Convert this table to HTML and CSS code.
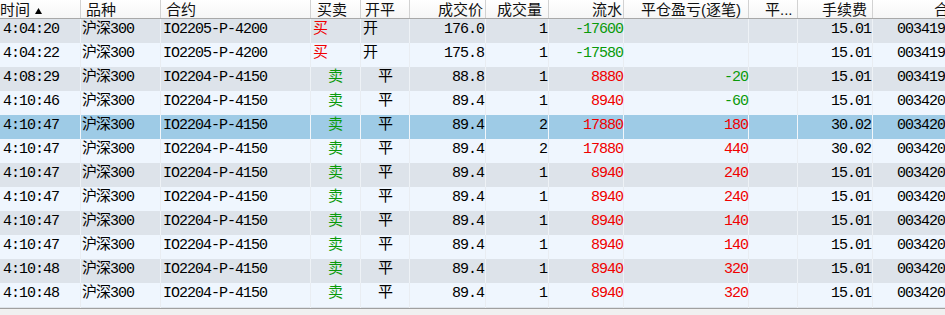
FILE: index.html
```html
<!DOCTYPE html>
<html lang="zh-CN">
<head>
<meta charset="utf-8">
<title>成交记录</title>
<link rel="stylesheet" href="styles.css">
</head>
<body>
<div class="grid">
  <div class="head">
    <div class="h c1">时间<svg class="sort" width="7" height="6" viewBox="0 0 7 6"><path d="M3.5 0L7 6H0z" fill="#000"/></svg></div>
    <div class="h c2">品种</div>
    <div class="h c3">合约</div>
    <div class="h c4">买卖</div>
    <div class="h c5">开平</div>
    <div class="h c6 r">成交价</div>
    <div class="h c7 r">成交量</div>
    <div class="h c8 r">流水</div>
    <div class="h c9 r">平仓盈亏(逐笔)</div>
    <div class="h c10">平...</div>
    <div class="h c11 r">手续费</div>
    <div class="h c12">合约编号</div>
  </div>

  <div class="row odd">
    <div class="d c1">4:04:20</div><div class="d c2">沪深300</div><div class="d c3">IO2205-P-4200</div>
    <div class="d c4 red">买</div><div class="d c5">开</div><div class="d c6 r">176.0</div><div class="d c7 r">1</div>
    <div class="d c8 r green">-17600</div><div class="d c9 r"></div><div class="d c10"></div><div class="d c11 r">15.01</div><div class="d c12">00341901</div>
  </div>
  <div class="row even">
    <div class="d c1">4:04:22</div><div class="d c2">沪深300</div><div class="d c3">IO2205-P-4200</div>
    <div class="d c4 red">买</div><div class="d c5">开</div><div class="d c6 r">175.8</div><div class="d c7 r">1</div>
    <div class="d c8 r green">-17580</div><div class="d c9 r"></div><div class="d c10"></div><div class="d c11 r">15.01</div><div class="d c12">00341902</div>
  </div>
  <div class="row odd">
    <div class="d c1">4:08:29</div><div class="d c2">沪深300</div><div class="d c3">IO2204-P-4150</div>
    <div class="d c4 green sh">卖</div><div class="d c5 sh">平</div><div class="d c6 r">88.8</div><div class="d c7 r">1</div>
    <div class="d c8 r red">8880</div><div class="d c9 r green">-20</div><div class="d c10"></div><div class="d c11 r">15.01</div><div class="d c12">00341903</div>
  </div>
  <div class="row even">
    <div class="d c1">4:10:46</div><div class="d c2">沪深300</div><div class="d c3">IO2204-P-4150</div>
    <div class="d c4 green sh">卖</div><div class="d c5 sh">平</div><div class="d c6 r">89.4</div><div class="d c7 r">1</div>
    <div class="d c8 r red">8940</div><div class="d c9 r green">-60</div><div class="d c10"></div><div class="d c11 r">15.01</div><div class="d c12">00342001</div>
  </div>
  <div class="row sel">
    <div class="d c1">4:10:47</div><div class="d c2">沪深300</div><div class="d c3">IO2204-P-4150</div>
    <div class="d c4 green sh">卖</div><div class="d c5 sh">平</div><div class="d c6 r">89.4</div><div class="d c7 r">2</div>
    <div class="d c8 r red">17880</div><div class="d c9 r red">180</div><div class="d c10"></div><div class="d c11 r">30.02</div><div class="d c12">00342002</div>
  </div>
  <div class="row even">
    <div class="d c1">4:10:47</div><div class="d c2">沪深300</div><div class="d c3">IO2204-P-4150</div>
    <div class="d c4 green sh">卖</div><div class="d c5 sh">平</div><div class="d c6 r">89.4</div><div class="d c7 r">2</div>
    <div class="d c8 r red">17880</div><div class="d c9 r red">440</div><div class="d c10"></div><div class="d c11 r">30.02</div><div class="d c12">00342003</div>
  </div>
  <div class="row odd">
    <div class="d c1">4:10:47</div><div class="d c2">沪深300</div><div class="d c3">IO2204-P-4150</div>
    <div class="d c4 green sh">卖</div><div class="d c5 sh">平</div><div class="d c6 r">89.4</div><div class="d c7 r">1</div>
    <div class="d c8 r red">8940</div><div class="d c9 r red">240</div><div class="d c10"></div><div class="d c11 r">15.01</div><div class="d c12">00342004</div>
  </div>
  <div class="row even">
    <div class="d c1">4:10:47</div><div class="d c2">沪深300</div><div class="d c3">IO2204-P-4150</div>
    <div class="d c4 green sh">卖</div><div class="d c5 sh">平</div><div class="d c6 r">89.4</div><div class="d c7 r">1</div>
    <div class="d c8 r red">8940</div><div class="d c9 r red">240</div><div class="d c10"></div><div class="d c11 r">15.01</div><div class="d c12">00342005</div>
  </div>
  <div class="row odd">
    <div class="d c1">4:10:47</div><div class="d c2">沪深300</div><div class="d c3">IO2204-P-4150</div>
    <div class="d c4 green sh">卖</div><div class="d c5 sh">平</div><div class="d c6 r">89.4</div><div class="d c7 r">1</div>
    <div class="d c8 r red">8940</div><div class="d c9 r red">140</div><div class="d c10"></div><div class="d c11 r">15.01</div><div class="d c12">00342006</div>
  </div>
  <div class="row even">
    <div class="d c1">4:10:47</div><div class="d c2">沪深300</div><div class="d c3">IO2204-P-4150</div>
    <div class="d c4 green sh">卖</div><div class="d c5 sh">平</div><div class="d c6 r">89.4</div><div class="d c7 r">1</div>
    <div class="d c8 r red">8940</div><div class="d c9 r red">140</div><div class="d c10"></div><div class="d c11 r">15.01</div><div class="d c12">00342007</div>
  </div>
  <div class="row odd">
    <div class="d c1">4:10:48</div><div class="d c2">沪深300</div><div class="d c3">IO2204-P-4150</div>
    <div class="d c4 green sh">卖</div><div class="d c5 sh">平</div><div class="d c6 r">89.4</div><div class="d c7 r">1</div>
    <div class="d c8 r red">8940</div><div class="d c9 r red">320</div><div class="d c10"></div><div class="d c11 r">15.01</div><div class="d c12">00342008</div>
  </div>
  <div class="row even">
    <div class="d c1">4:10:48</div><div class="d c2">沪深300</div><div class="d c3">IO2204-P-4150</div>
    <div class="d c4 green sh">卖</div><div class="d c5 sh">平</div><div class="d c6 r">89.4</div><div class="d c7 r">1</div>
    <div class="d c8 r red">8940</div><div class="d c9 r red">320</div><div class="d c10"></div><div class="d c11 r">15.01</div><div class="d c12">00342009</div>
  </div>
  <div class="row odd">
    <div class="d c1">4:10:48</div><div class="d c2">沪深300</div><div class="d c3">IO2204-P-4150</div>
    <div class="d c4 green sh">卖</div><div class="d c5 sh">平</div><div class="d c6 r">89.4</div><div class="d c7 r">1</div>
    <div class="d c8 r red">8940</div><div class="d c9 r red">320</div><div class="d c10"></div><div class="d c11 r">15.01</div><div class="d c12">00342010</div>
  </div>
</div>
<div class="hscroll"></div>
</body>
</html>
```

FILE: styles.css
```css
html, body {
  margin: 0;
  padding: 0;
  background: #f0f0f0;
  overflow: hidden;
}

.grid {
  width: 945px;
  height: 308px;
  overflow: hidden;
  background: #eff6fe;
}

.head,
.row {
  display: grid;
  grid-template-columns: 81px 80px 150px 50px 49px 76px 63px 75px 125px 49px 75px 120px;
  width: 993px;
}

.head {
  height: 18px;
  border-bottom: 1px solid #a8a8a8;
  background: linear-gradient(#ffffff, #f6f6f6);
}

.h {
  box-sizing: border-box;
  height: 18px;
  border-right: 1px solid #d2d2d2;
  font-family: "Liberation Sans", "Noto Sans CJK SC", sans-serif;
  font-size: 15px;
  line-height: 20px;
  color: #111;
  white-space: nowrap;
}

.row {
  height: 24px;
}

.odd { background: #dde3ea; }
.even { background: #eff6fe; }
.sel { background: #9ecbe6; }

.d {
  box-sizing: border-box;
  height: 24px;
  border-right: 1px solid #e9edf2;
  font-family: "Liberation Mono", "Noto Sans CJK SC", monospace;
  font-size: 15px;
  letter-spacing: -1px;
  line-height: 22px;
  color: #000;
  white-space: nowrap;
}

.sel .d { border-right-color: #f2f6fa; }
.odd .d { border-right-color: #eef2f6; }

.r { text-align: right; }

.red { color: #f00000; }
.green { color: #0a9a0a; }

/* header paddings */
.h.c1 { padding-left: 0; }
.h.c2 { padding-left: 5px; }
.h.c3 { padding-left: 5px; }
.h.c4 { padding-left: 6px; }
.h.c5 { padding-left: 4px; }
.h.c6 { padding-right: 2px; }
.h.c7 { padding-right: 6px; }
.h.c8 { padding-right: 1px; }
.h.c9 { padding-right: 7px; }
.h.c10 { padding-left: 16px; }
.h.c11 { padding-right: 5px; }
.h.c12 { padding-left: 61px; }

.sort {
  margin-left: 5px;
  vertical-align: 1px;
}

/* data paddings */
.d.c1 { padding-left: 3px; }
.d.c2 { padding-left: 1px; }
.d.c3 { padding-left: 2px; }
.d.c4 { padding-left: 2px; }
.d.c5 { padding-left: 2px; }
.d.c4.sh, .d.c5.sh { padding-left: 17px; }
.d.c6 { padding-right: 1px; }
.d.c7 { padding-right: 1px; }
.d.c8 { padding-right: 0; }
.d.c9 { padding-right: 0; }
.d.c11 { padding-right: 1px; }
.d.c12 { padding-left: 24px; }

.hscroll {
  height: 6px;
  border-top: 1px solid #a0a0a0;
  background: #f0f0f0;
}
```
